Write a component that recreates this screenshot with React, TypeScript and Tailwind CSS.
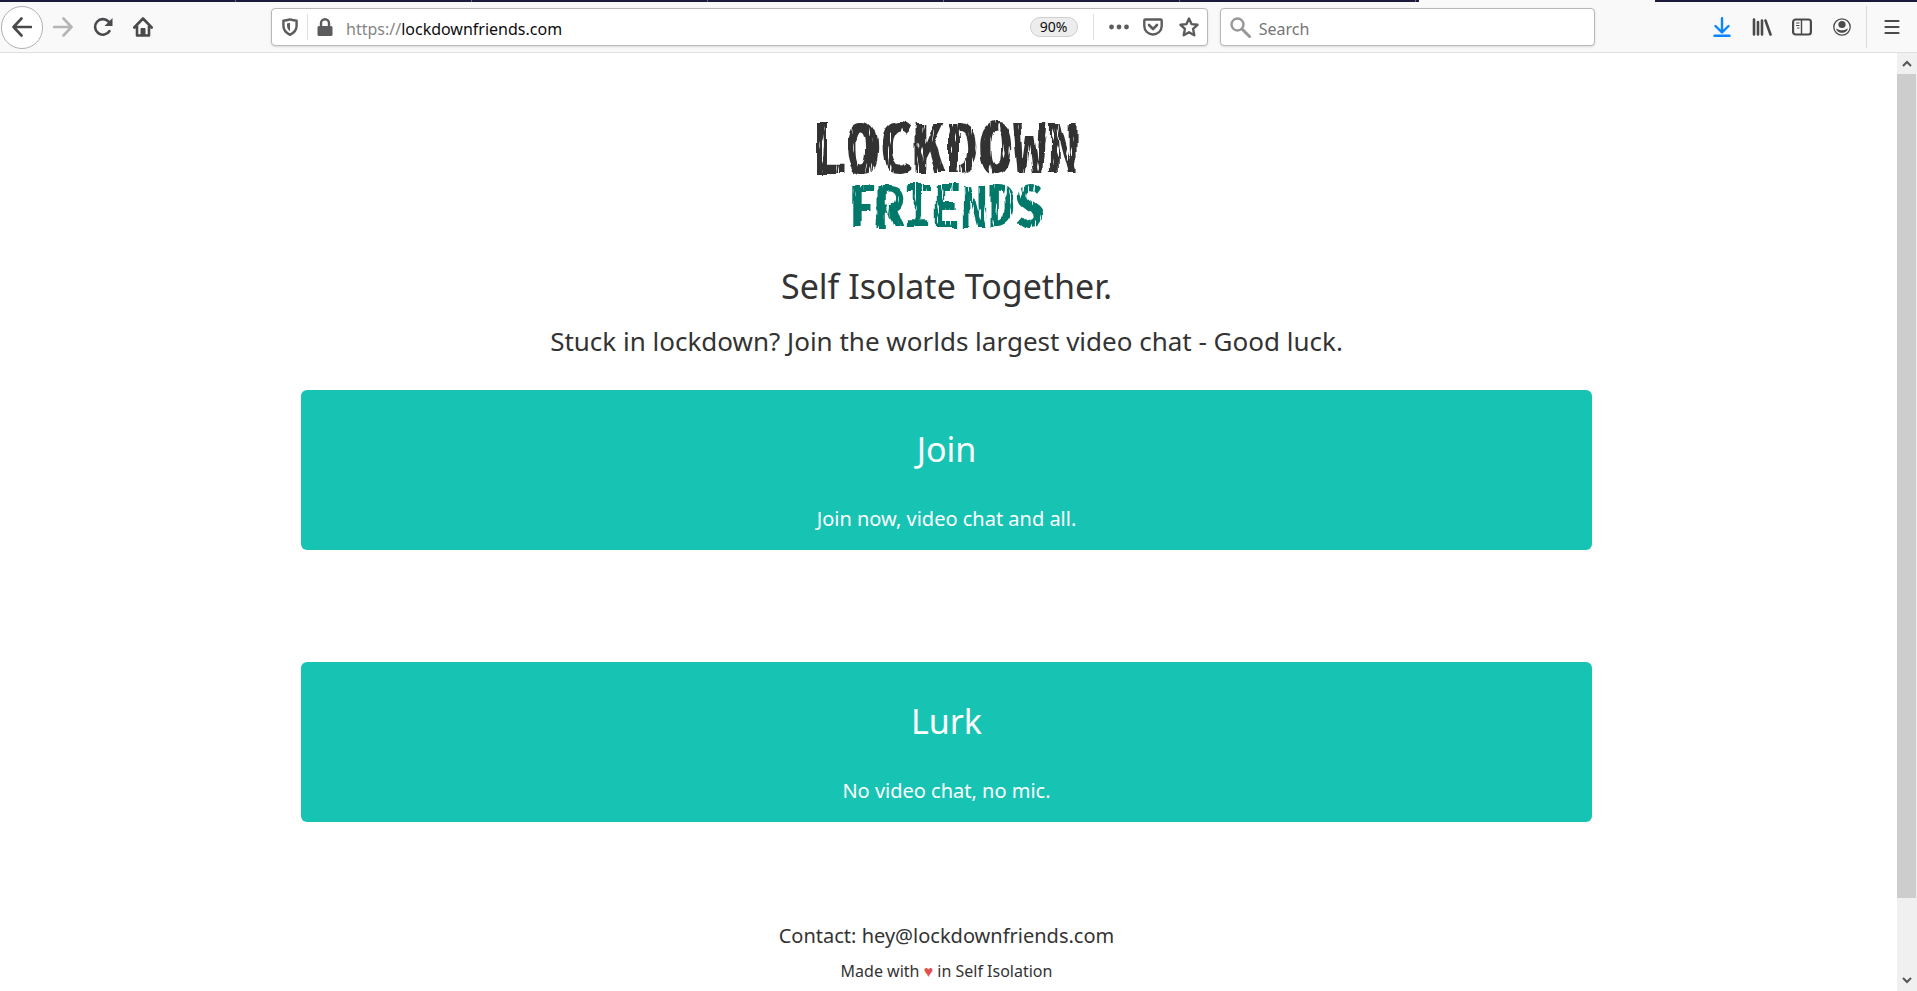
import type { ReactNode } from 'react';

const tabs = [0, 1, 2, 3, 4, 5];

interface IconButtonProps {
  label: string;
  className?: string;
  children: ReactNode;
}

function IconButton({ label, className = '', children }: IconButtonProps) {
  return (
    <button type="button" aria-label={label} className={`flex shrink-0 items-center justify-center ${className}`}>
      {children}
    </button>
  );
}

function TabStrip() {
  return (
    <div className="flex h-[2px] bg-[#f9f9fa]">
      <div className="flex w-[1419px] bg-[#1c1a3a]">
        {tabs.map((tab) => (
          <div key={tab} className="w-[236px] border-r border-[#6b6a80]" />
        ))}
      </div>
      <div className="w-[236px]" />
      <div className="flex-1 bg-[#1c1a3a]" />
    </div>
  );
}

function AddressBar() {
  return (
    <div className="flex h-[38px] min-w-0 flex-[944] items-center rounded-sm border border-[#b8b8b9] bg-white shadow-sm">
      <IconButton label="Tracking protection" className="w-[35px]">
        <svg width="16" height="18" viewBox="0 0 16 18" fill="none" stroke="#5c5c5e" strokeWidth="2.4">
          <path d="M8 1.4C10 2 12 2.500 14.600 2.600v5.200c0 4-2.400 7-6.600 9C3.800 14.800 1.400 11.800 1.400 7.800V2.600C4 2.500 6 2 8 1.400z" strokeLinejoin="round" />
          <path d="M8 4.800v8.400c-2-1.500-3-3-3-5.600V5.400z" fill="#5c5c5e" stroke="none" />
        </svg>
      </IconButton>
      <div className="h-[26px] w-px bg-[#e0e0e1]" />
      <IconButton label="Site security" className="w-[34px]">
        <svg width="16" height="18" viewBox="0 0 16 18">
          <path d="M4 9V5.200a4 4 0 0 1 8 0V9" fill="none" stroke="#5c5c5e" strokeWidth="2.400" />
          <rect x="0.5" y="8" width="15" height="10" rx="1.500" fill="#5c5c5e" />
        </svg>
      </IconButton>
      <div className="min-w-0 flex-1 pt-1 pl-1 text-base text-[#0c0c0d]">
        <span className="text-[#858586]">https://</span>lockdownfriends.com
      </div>
      <button type="button" className="h-5 w-12 shrink-0 rounded-full border border-[#cfcfd0] bg-[#ededee] text-sm leading-none text-[#0c0c0d]">
        90%
      </button>
      <div className="ml-[15px] h-[26px] w-px bg-[#e0e0e1]" />
      <IconButton label="Page actions" className="ml-2 w-[34px]">
        <svg width="20" height="6" viewBox="0 0 20 6" fill="#5c5c5e">
          <circle cx="2.5" cy="3" r="2.400" />
          <circle cx="10" cy="3" r="2.400" />
          <circle cx="17.5" cy="3" r="2.400" />
        </svg>
      </IconButton>
      <IconButton label="Save to Pocket" className="w-[35px]">
        <svg width="20" height="18" viewBox="0 0 20 18" fill="none" stroke="#5c5c5e" strokeWidth="2.400" strokeLinejoin="round" strokeLinecap="round">
          <path d="M2.300 1.500h15.400c.6 0 1 .4 1 1V8a8.700 8.500 0 0 1-17.400 0V2.500c0-.6.4-1 1-1z" />
          <path d="M6 7l4 4 4-4" strokeWidth="2.600" />
        </svg>
      </IconButton>
      <IconButton label="Bookmark this page" className="w-[36px]">
        <svg width="20" height="20" viewBox="0 0 20 20" fill="none" stroke="#5c5c5e" strokeWidth="2.400" strokeLinejoin="round">
          <path d="M10 1.600l2.500 5.500 6 .7-4.400 4.100 1.200 6.300L10 15.200l-5.300 3 1.200-6.300L1.500 7.800l6-.7z" />
        </svg>
      </IconButton>
    </div>
  );
}

function SearchBox() {
  return (
    <div className="ml-3 flex h-[38px] min-w-0 flex-[368] items-center rounded-sm border border-[#b8b8b9] bg-white pl-[9px] shadow-sm">
      <svg width="21" height="21" viewBox="0 0 21 21" fill="none" stroke="#979798">
        <circle cx="7.500" cy="7.500" r="6" strokeWidth="2.400" />
        <path d="M12 12l7.500 7.500" strokeWidth="3" strokeLinecap="round" />
      </svg>
      <input
        type="text"
        aria-label="Search"
        placeholder="Search"
        className="min-w-0 flex-1 bg-transparent px-2 pt-1 text-base outline-none placeholder:text-[#757576]"
      />
    </div>
  );
}

function Toolbar() {
  return (
    <div className="flex h-[51px] items-center border-b border-[#dfdfe0] bg-[#f9f9fa] font-['Noto_Sans','Open_Sans',sans-serif]">
      <IconButton label="Back" className="ml-px h-[43px] w-[42px] rounded-full border border-[#b1b1b2] bg-white">
        <svg width="20" height="20" viewBox="0 0 20 20" fill="none" stroke="#4a4a4c" strokeWidth="2.600" strokeLinecap="round" strokeLinejoin="round">
          <path d="M19 10H1.500M9.500 1.500L1.500 10l8 8.500" />
        </svg>
      </IconButton>
      <IconButton label="Forward" className="w-[40px]">
        <svg width="20" height="20" viewBox="0 0 20 20" fill="none" stroke="#b5b5b6" strokeWidth="2.600" strokeLinecap="round" strokeLinejoin="round">
          <path d="M1 10h17.500M10.500 1.500l8 8.500-8 8.500" />
        </svg>
      </IconButton>
      <IconButton label="Reload" className="w-[40px]">
        <svg width="20" height="20" viewBox="0 0 20 20" fill="none" stroke="#4a4a4c" strokeWidth="2.600" strokeLinecap="round">
          <path d="M16.500 14A7.800 7.800 0 1 1 15.500 4.500" />
          <path d="M19.500 1v8h-8z" fill="#4a4a4c" stroke="none" />
        </svg>
      </IconButton>
      <IconButton label="Home" className="w-[40px]">
        <svg width="20" height="20" viewBox="0 0 20 20" fill="none" stroke="#4a4a4c" strokeWidth="2.600" strokeLinecap="round" strokeLinejoin="round">
          <path d="M1.300 10.500L10 1.500l8.700 9M4 9v9.500h12V9" />
          <path d="M8 18v-6.500h4V18z" fill="#4a4a4c" strokeWidth="1" />
        </svg>
      </IconButton>
      <div className="ml-[108px] flex min-w-0 flex-1 items-center">
        <AddressBar />
        <SearchBox />
      </div>
      <IconButton label="Downloads" className="ml-[107px] w-[40px]">
        <svg width="18" height="20" viewBox="0 0 18 20" fill="none" stroke="#0a84ff" strokeWidth="2.400" strokeLinecap="round" strokeLinejoin="round">
          <path d="M9 1.200V15M2.500 9L9 15.500 15.500 9M1.500 18.800h15" />
        </svg>
      </IconButton>
      <IconButton label="Library" className="w-[40px]">
        <svg width="20" height="18" viewBox="0 0 20 18" fill="none" stroke="#4a4a4c" strokeWidth="2.600" strokeLinecap="round">
          <path d="M2 1.500v15M6 4v12.500M10 2.500v14M13.500 2.500l5 14" />
        </svg>
      </IconButton>
      <IconButton label="Sidebars" className="w-[40px]">
        <svg width="20" height="18" viewBox="0 0 20 18" fill="none" stroke="#4a4a4c" strokeWidth="2.200" strokeLinecap="round">
          <rect x="1.100" y="1.500" width="17.800" height="15" rx="2.500" />
          <path d="M9.500 2v14" strokeWidth="1.400" />
          <path d="M4.500 5h2.500M4.500 7.500h2.500M5.500 10H7" strokeWidth="1.200" />
        </svg>
      </IconButton>
      <IconButton label="Account" className="w-[40px]">
        <svg width="18" height="18" viewBox="0 0 18 18" fill="#4a4a4c">
          <circle cx="9" cy="9" r="8.200" fill="none" stroke="#4a4a4c" strokeWidth="1.300" />
          <circle cx="9" cy="6.500" r="3.600" />
          <path d="M3.200 10.500c1.500.8 3.500 1.800 5.800 1.800s4.300-1 5.800-1.800c0 2.200-2.700 4.300-5.800 4.300s-5.800-2.100-5.800-4.300z" />
        </svg>
      </IconButton>
      <div className="ml-1 h-[42px] w-px bg-[#dadadb]" />
      <IconButton label="Open menu" className="w-[50px]">
        <svg width="16" height="16" viewBox="0 0 16 16" stroke="#4a4a4c" strokeWidth="2.200" strokeLinecap="round">
          <path d="M1.500 2h13M1.500 8h13M1.500 14h13" />
        </svg>
      </IconButton>
    </div>
  );
}

// Wordmark with a dry-brush finish
function Logo() {
  return (
    <svg
      width="310"
      height="170"
      viewBox="0 -20 310 170"
      role="img"
      aria-label="Lockdown Friends"
      className="font-['Noto_Sans_Mono_CJK_SC','Noto_Sans_Mono_CJK_JP','Liberation_Mono',monospace] font-bold"
    >
      <defs>
        <filter id="brush" x="-5%" y="-10%" width="110%" height="120%">
          <feTurbulence type="fractalNoise" baseFrequency="0.05 0.03" numOctaves="2" seed="4" result="wave" />
          <feDisplacementMap in="SourceGraphic" in2="wave" scale="9" xChannelSelector="R" yChannelSelector="G" result="rough" />
          <feTurbulence type="fractalNoise" baseFrequency="0.4 0.05" numOctaves="2" seed="9" result="grain" />
          <feColorMatrix in="grain" type="matrix" values="0 0 0 0 0  0 0 0 0 0  0 0 0 0 0  0 0 0 -12 8.8" result="mask" />
          <feComposite in="rough" in2="mask" operator="in" />
        </filter>
      </defs>
      <g filter="url(#brush)" textAnchor="middle">
        <text x="154" y="73" fontSize="67" fill="#333333">LOCKDOWN</text>
        <text x="154" y="127" fontSize="56" fill="#04796a">FRIENDS</text>
      </g>
    </svg>
  );
}

interface ChoiceCardProps {
  title: string;
  text: string;
}

function ChoiceCard({ title, text }: ChoiceCardProps) {
  return (
    <button type="button" className="flex w-full flex-col items-center rounded-md bg-[#17c4b3] pt-9 pb-4 text-white">
      <span className="text-[34px] leading-[46px]">{title}</span>
      <span className="mt-8 text-xl leading-[30px]">{text}</span>
    </button>
  );
}

function ScrollBar() {
  return (
    <div className="flex w-5 shrink-0 flex-col items-center bg-[#f0f0f0]">
      <IconButton label="Scroll up" className="h-[21px] w-full">
        <svg width="10" height="7" viewBox="0 0 10 7" fill="none" stroke="#555555" strokeWidth="2">
          <path d="M1 6l4-4 4 4" />
        </svg>
      </IconButton>
      <div className="mr-px w-[19px] flex-[825] bg-[#cdcdcd]" />
      <div className="flex-[72]" />
      <IconButton label="Scroll down" className="h-[21px] w-full">
        <svg width="10" height="7" viewBox="0 0 10 7" fill="none" stroke="#555555" strokeWidth="2">
          <path d="M1 1l4 4 4-4" />
        </svg>
      </IconButton>
    </div>
  );
}

export default function App() {
  return (
    <div className="flex h-screen flex-col overflow-hidden bg-white">
      <TabStrip />
      <Toolbar />
      <div className="flex min-h-0 flex-1">
        <main className="flex min-w-0 flex-1 flex-col items-center overflow-hidden pt-[27px] pr-1 font-['Noto_Sans',sans-serif] text-[#333333]">
          <Logo />
          <h1 className="mt-3 text-[34px] leading-[48px]">Self Isolate Together.</h1>
          <h2 className="mt-3 text-[26px] leading-[38px]">Stuck in lockdown? Join the worlds largest video chat - Good luck.</h2>
          <div className="mt-[30px] flex w-[68.2%] flex-col gap-28">
            <ChoiceCard title="Join" text="Join now, video chat and all." />
            <ChoiceCard title="Lurk" text="No video chat, no mic." />
          </div>
          <footer className="mt-[99px] text-center">
            <p className="text-xl leading-[30px]">
              Contact: <a href="mailto:hey@lockdownfriends.com">hey@lockdownfriends.com</a>
            </p>
            <p className="mt-2 text-base leading-6">
              Made with <span className="text-[#e4504f]">♥</span> in Self Isolation
            </p>
          </footer>
        </main>
        <ScrollBar />
      </div>
    </div>
  );
}
